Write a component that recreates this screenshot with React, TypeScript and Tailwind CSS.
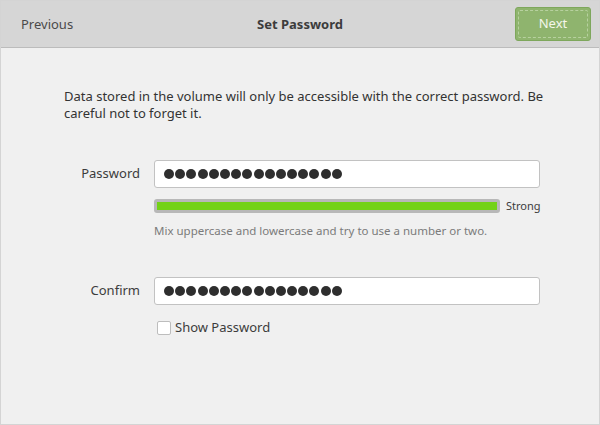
import React from "react";

const Dots = ({ count }: { count: number }) => (
  <div className="flex items-center gap-[1.2px]">
    {Array.from({ length: count }).map((_, i) => (
      <span key={i} className="block w-[10px] h-[10px] rounded-full bg-[#2e2e2e]" />
    ))}
  </div>
);

export default function App() {
  return (
    <div
      className="w-[600px] h-[425px] bg-[#f0f0f0] border border-[#d4d4d4] flex flex-col text-[#3c3c3c] overflow-hidden"
      style={{ fontFamily: '"Noto Sans", "Open Sans", sans-serif' }}
    >
      {/* header bar */}
      <div className="h-[47px] shrink-0 bg-[#d6d6d6] border-b border-[#bcbcbc] grid grid-cols-[1fr_auto_1fr] items-center px-[8px]">
        <span className="pl-[12px] pt-[2px] text-[13px] text-[#4a4a4a]">Previous</span>
        <span className="pt-[2px] text-[13px] font-bold text-[#3c3c3c]">Set Password</span>
        <div className="flex justify-end">
          <button className="w-[76px] h-[34px] rounded-[3px] bg-[#8fb46e] border border-[#7ea75c] p-[2px]">
            <span className="flex h-full w-full items-center justify-center border border-dashed border-[#b7d19f] rounded-[2px] text-[13px] text-[#f4f6ea]">
              Next
            </span>
          </button>
        </div>
      </div>

      {/* body */}
      <div className="flex flex-col pt-[40px] pl-[63px] pr-[40px]">
        <p className="text-[13px] leading-[17px] text-[#333]">
          Data stored in the volume will only be accessible with the correct password. Be careful not to forget it.
        </p>

        <div className="mt-[38px] grid grid-cols-[76px_1fr] gap-x-[14px] items-center">
          <label className="text-[13px] text-right text-[#3c3c3c]">Password</label>
          <div className="h-[28px] w-[386px] bg-white border border-[#c2c2c2] rounded-[3px] flex items-center pl-[9px]">
            <Dots count={16} />
          </div>

          <div />
          <div className="mt-[10px] flex items-center gap-[6px]">
            <div className="w-[346px] h-[14px] bg-[#b8b8b8] rounded-[3px] p-[3px]">
              <div className="h-full w-full bg-[#73d216]" />
            </div>
            <span className="text-[11px] text-[#3c3c3c]">Strong</span>
          </div>

          <div />
          <p className="mt-[7px] text-[11.5px] text-[#7b7b7b]">
            Mix uppercase and lowercase and try to use a number or two.
          </p>

          <label className="mt-[38px] text-[13px] text-right text-[#3c3c3c]">Confirm</label>
          <div className="mt-[38px] h-[28px] w-[386px] bg-white border border-[#c2c2c2] rounded-[3px] flex items-center pl-[9px]">
            <Dots count={16} />
          </div>

          <div />
          <label className="mt-[13px] ml-[3px] flex items-center gap-[4px] text-[13px] text-[#3c3c3c]">
            <span className="w-[14px] h-[14px] bg-white border border-[#bdbdbd] rounded-[2px]" />
            Show Password
          </label>
        </div>
      </div>
    </div>
  );
}
